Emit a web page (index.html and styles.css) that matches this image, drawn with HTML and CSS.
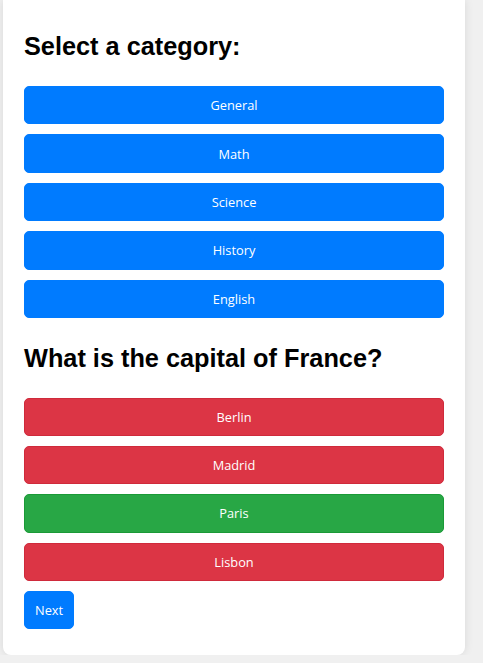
FILE: index.html
```html
<!DOCTYPE html>
<html lang="en">
<head>
<meta charset="utf-8">
<title>Quiz</title>
<link rel="stylesheet" href="styles.css">
</head>
<body>
<div class="card">
  <h2 class="title">Select a category:</h2>
  <div class="list">
    <button class="btn btn-blue">General</button>
    <button class="btn btn-blue">Math</button>
    <button class="btn btn-blue">Science</button>
    <button class="btn btn-blue">History</button>
    <button class="btn btn-blue">English</button>
  </div>
  <h2 class="title question">What is the capital of France?</h2>
  <div class="list answers">
    <button class="btn btn-red">Berlin</button>
    <button class="btn btn-red">Madrid</button>
    <button class="btn btn-green">Paris</button>
    <button class="btn btn-red">Lisbon</button>
  </div>
  <button class="btn btn-blue btn-next">Next</button>
</div>
</body>
</html>
```
FILE: styles.css
```css
html, body {
  margin: 0;
  padding: 0;
  background: #f0f0f0;
}

body {
  font-family: "Liberation Sans", Arial, sans-serif;
}

.card {
  width: 420px;
  margin-left: 3px;
  padding: 32px 21px 26px;
  background: #ffffff;
  border-radius: 0 0 8px 8px;
  box-shadow: 0 0 10px rgba(0, 0, 0, 0.1);
}

.title {
  margin: 0 0 26px;
  font-size: 25.3px;
  line-height: 28px;
  font-weight: bold;
  color: #000;
}

.question {
  margin-top: 26px;
  margin-bottom: 26px;
}

.list {
  display: flex;
  flex-direction: column;
  gap: 10px;
}

.btn {
  display: block;
  width: 100%;
  height: 38.4px;
  margin: 0;
  padding: 0 10px;
  border: 1px solid transparent;
  border-radius: 5px;
  font-family: "Open Sans", "Noto Sans", sans-serif;
  font-size: 12.8px;
  color: #ffffff;
  text-align: center;
  cursor: pointer;
}

.answers .btn {
  height: 38.2px;
}

.btn-blue {
  background: #007bff;
  border-color: #007bff;
}

.btn-red {
  background: #dc3545;
  border-color: #cf2a3b;
}

.btn-green {
  background: #28a745;
  border-color: #1a9a37;
}

.btn-next {
  width: auto;
  height: 38px;
  margin-top: 10.5px;
  padding: 0 10px;
}
```
